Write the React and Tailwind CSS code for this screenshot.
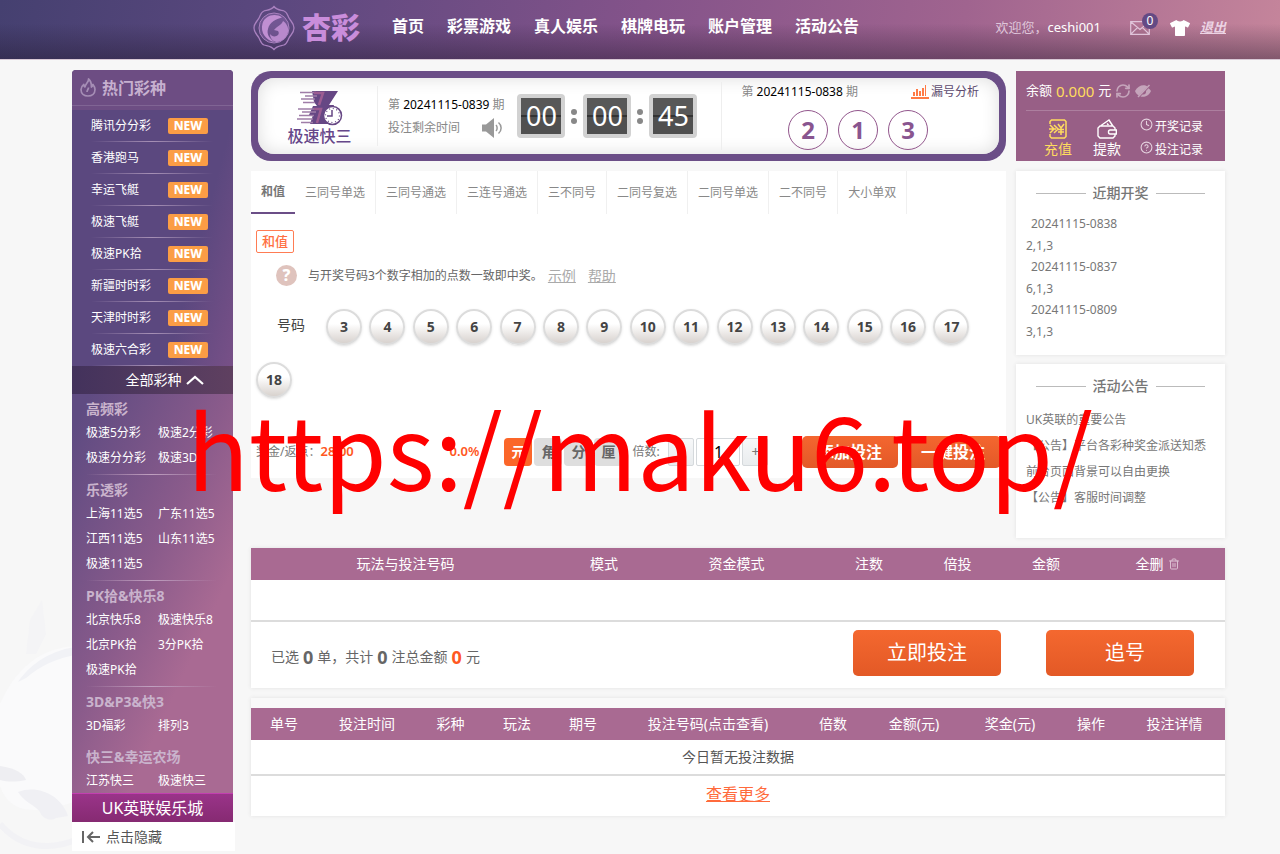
import { useState } from 'react';
import { CircleHelp, Clock, RefreshCw, Trash2 } from 'lucide-react';
import { FaTshirt } from 'react-icons/fa';

const NAV = ['首页', '彩票游戏', '真人娱乐', '棋牌电玩', '账户管理', '活动公告'];

const HOT = ['腾讯分分彩', '香港跑马', '幸运飞艇', '极速飞艇', '极速PK拾', '新疆时时彩', '天津时时彩', '极速六合彩'];

const GROUPS = [
  { title: '高频彩', items: ['极速5分彩', '极速2分彩', '极速分分彩', '极速3D'], end: 'mt-1 mr-4 h-px bg-linear-to-r from-transparent via-[#c0a0c0] to-transparent' },
  { title: '乐透彩', items: ['上海11选5', '广东11选5', '江西11选5', '山东11选5', '极速11选5'], end: 'mt-1 mr-4 h-px bg-linear-to-r from-transparent via-[#c0a0c0] to-transparent' },
  { title: 'PK拾&快乐8', items: ['北京快乐8', '极速快乐8', '北京PK拾', '3分PK拾', '极速PK拾'], end: 'mt-1 mr-4 h-px bg-linear-to-r from-transparent via-[#c0a0c0] to-transparent' },
  { title: '3D&P3&快3', items: ['3D福彩', '排列3'], end: 'h-1' },
  { title: '快三&幸运农场', items: ['江苏快三', '极速快三'], end: 'h-0' },
];

const TABS = ['和值', '三同号单选', '三同号通选', '三连号通选', '三不同号', '二同号复选', '二同号单选', '二不同号', '大小单双'];

const BALLS = [3, 4, 5, 6, 7, 8, 9, 10, 11, 12, 13, 14, 15, 16, 17, 18];

const UNITS = ['元', '角', '分', '厘'];

const RECENT = [
  { issue: '20241115-0838', code: '2,1,3' },
  { issue: '20241115-0837', code: '6,1,3' },
  { issue: '20241115-0809', code: '3,1,3' },
];

const NOTICES = ['UK英联的重要公告', '【公告】平台各彩种奖金派送知悉', '前台页面背景可以自由更换', '【公告】客服时间调整'];

const BET_COLS = [
  { label: '玩法与投注号码', width: 'w-[309px]' },
  { label: '模式', width: 'w-[88px]' },
  { label: '资金模式', width: 'w-[177px]' },
  { label: '注数', width: 'w-[88px]' },
  { label: '倍投', width: 'w-[89px]' },
  { label: '金额', width: 'w-[88px]' },
];

const RECORD_COLS = [
  { label: '单号', width: 'w-[66px]' },
  { label: '投注时间', width: 'w-[100px]' },
  { label: '彩种', width: 'w-[67px]' },
  { label: '玩法', width: 'w-[66px]' },
  { label: '期号', width: 'w-[66px]' },
  { label: '投注号码(点击查看)', width: 'w-[184px]' },
  { label: '倍数', width: 'w-[66px]' },
  { label: '金额(元)', width: 'w-[96px]' },
  { label: '奖金(元)', width: 'w-[96px]' },
  { label: '操作', width: 'w-[66px]' },
  { label: '投注详情', width: 'w-[101px]' },
];

function LogoMark() {
  return (
    <svg viewBox="0 0 44 46" className="h-[46px] w-11" fill="none" stroke="#a981bf">
      <path
        d="M22 1.500c3 4 7 3.500 10 4.500 3 1 3.500 4 5 7 1.500 3 5 5 5 10s-3.500 7-5 10c-1.500 3-2 6-5 7-3 1-7 .5-10 4.500-3-4-7-3.500-10-4.500-3-1-3.500-4-5-7-1.500-3-5-5-5-10s3.500-7 5-10c1.500-3 2-6 5-7 3-1 7-.5 10-4.500z"
        strokeWidth="1.300"
      />
      <circle cx="22" cy="23" r="15" fill="#8f68ac" fillOpacity=".45" strokeWidth="1" />
      <path d="M30 12.500c-7-5-17-2-19.500 6-2.500 9 3.500 17 12 18.500-5.500-4-8-8-6.500-13 1.500-7 8-10 14-11.500z" fill="#c08fd2" stroke="none" />
      <path d="M18 29c2 3 6 3 8 1 1-1 1-3 0-4l-4-1c3-4 8-5 9-9 3 2 6 6 5 11-1 5-5 9-11 10-4 0-7-4-7-8z" fill="#b889cc" stroke="none" />
    </svg>
  );
}

function MailIcon() {
  return (
    <svg viewBox="0 0 20 14" className="h-3.5 w-5" fill="none" stroke="#e0c4da" strokeWidth="1.200">
      <path d="M.7.7h18.600v12.600H.7zM.7.7 10 8.500 19.300.7M.7 13.300l6.800-6.700M19.300 13.300l-6.800-6.700" />
    </svg>
  );
}

function FlameIcon() {
  return (
    <svg viewBox="0 0 16 19" className="h-[19px] w-4" fill="none" stroke="#a58db5" strokeWidth="1.700" strokeLinejoin="round">
      <path d="M8.500 1c.5 3-3 4.500-3.500 8-.8-.6-1.200-1.500-1.200-2.600C1.500 8.300 1 10 1 11.500 1 15.500 4 18 8 18s7-2.500 7-6.500c0-2-1-3.700-2-5-.2 1.300-.7 2-1.600 2.500C11.500 5.500 10.500 2.500 8.500 1z" />
      <path d="M8.500 9.500c0 2-1.500 2.500-1.500 4.500" />
    </svg>
  );
}

function SpeakerIcon() {
  return (
    <svg viewBox="0 0 22 20" className="h-5 w-[22px]" fill="#999">
      <path d="M0 6.500h4L12 0v20l-8-6.500H0z" />
      <path d="M14 7c1.500 1.500 1.500 4.500 0 6M16.500 4.500c3.500 3 3.500 8 0 11" fill="none" stroke="#999" strokeWidth="1.500" />
    </svg>
  );
}

function GameLogo() {
  return (
    <svg viewBox="0 0 46 36" className="h-9 w-[46px]">
      <path d="M15 1h26l-9 14h5L31 34H13l3-9h-4l4-9h4l-3-4z" fill="#664784" />
      <path d="M3 2.500h16M8 6h12M4 9h14M6 12.500h12" stroke="#9f7da8" strokeWidth="1.700" />
      <path d="M1 19h17M5 22h14M2 25.500h15M0 29h16M4 32.500h12" stroke="#9f7da8" strokeWidth="1.700" />
      <path d="M17 3h9l-4 12M17 19h7l-4 14" stroke="#9c5c92" strokeWidth="2.500" fill="none" />
      <circle cx="35.500" cy="25.500" r="9" fill="#fff" stroke="#664784" strokeWidth="1.500" />
      <path d="M35 20v6h-5" stroke="#664784" strokeWidth="1.500" fill="none" />
      <circle cx="35.500" cy="25.500" r="7" fill="none" stroke="#664784" strokeWidth="1.200" strokeDasharray="1 2.670" />
    </svg>
  );
}

function ChartIcon() {
  return (
    <svg viewBox="0 0 18 14" className="h-3.5 w-[18px]" fill="#ff7a45">
      <path d="M0 12h18v2H0zM2 7h2v4H2zM5 4h2v7H5zM8 6h2v5H8zM11 3h2v8h-2zM14 0h1v11h-1z" />
    </svg>
  );
}

function HiddenEyeIcon() {
  return (
    <svg viewBox="0 0 16 14" className="ml-1 h-3.5 w-4" fill="#c5a5bb">
      <path d="M0 7c3-6 9-7 12.500-4.500L4 11.500C2 10.500.8 9 0 7zM16 7c-2.500 5.500-7 6.500-10.500 5.500l2-2c2.500.5 4-1.500 3.500-3.500l2.500-2.700C14.500 5 15.300 6 16 7z" />
      <path d="M3 13 14.500 1" stroke="#c5a5bb" strokeWidth="1.500" />
    </svg>
  );
}

function RechargeIcon() {
  return (
    <svg viewBox="0 0 18 20" className="h-5 w-[18px]" fill="none" stroke="#ffdc5e" strokeWidth="1.500">
      <path d="M1 5V2.500L2.500 1h13L17 2.500v15L15.500 19h-13L1 17.500V15M0 10h7M1 6l4 4-4 4M5 6l4 4-4 4" />
      <path d="m9 5 3 4 3-4M12 9v7M9 10.500h6M9 13h6" />
    </svg>
  );
}

function WithdrawIcon() {
  return (
    <svg viewBox="0 0 20 20" className="h-5 w-5" fill="none" stroke="#fff" strokeWidth="1.400">
      <path d="M18 11V9l-2-2H3L1 9v8l2 2h13l2-2v-2M4 6.500l8-5.500 3.500 5.500M19.300 11H13c-2 0-2 4 0 4h6.300z" />
      <path d="m10 4.500 1.500 1.500" />
    </svg>
  );
}

function Header() {
  return (
    <header className="h-[60px] border-b border-[#d9c9d6] bg-[linear-gradient(to_bottom,transparent_40%,rgba(30,20,40,0.4)),linear-gradient(100deg,#454070_0%,#5c487f_22%,#84538a_50%,#a0648f_75%,#c5859b_100%)]">
      <div className="flex h-full items-center pr-[54px] pl-[252px] text-white">
        <a href="#home" className="flex items-center gap-1.5 pb-1">
          <LogoMark />
          <span className="text-[29px] leading-9 font-black text-[#c98ddb]">杏彩</span>
        </a>
        <nav className="ml-8 flex gap-[23px] pb-2 text-base font-bold whitespace-nowrap">
          {NAV.map((item) => (
            <a key={item} href="#nav">{item}</a>
          ))}
        </nav>
        <div className="ml-auto flex items-center pb-1 text-[13px] whitespace-nowrap">
          <span className="text-[#dfc6da]">欢迎您，</span>
          <span>ceshi001</span>
          <a href="#mail" className="relative ml-[29px]" aria-label="站内信">
            <MailIcon />
            <span className="absolute -top-2 left-3 h-4 w-4 rounded-full bg-[#644a84] text-center text-xs leading-4">0</span>
          </a>
          <a href="#skin" className="ml-5" aria-label="换肤">
            <FaTshirt className="h-5 w-5" />
          </a>
          <a href="#logout" className="ml-2.5 font-bold text-[#ecd3e4] italic underline">退出</a>
        </div>
      </div>
    </header>
  );
}

function Sidebar() {
  return (
    <aside className="w-[163px] shrink-0 text-xs text-white">
      <div className="mr-0.5 overflow-hidden rounded-t-sm">
        <div className="bg-[linear-gradient(105deg,#5b487f_70%,#7b5188)]">
          <div className="h-10 bg-[#6d4d83]">
            <h2 className="flex h-9 items-center gap-1.5 border-b border-[#806494] pl-2 text-base font-bold text-[#c6b0cf]">
              <FlameIcon />
              热门彩种
            </h2>
          </div>
          {HOT.map((name) => (
            <div key={name} className="pl-[19px]">
              <a href="#lottery" className="flex h-[31px] items-center">
                <span className="w-[77px]">{name}</span>
                <span className="h-4 w-10 rounded-xs bg-[#fb9d45] text-center text-xs leading-4 font-extrabold">NEW</span>
              </a>
              <div className="mr-5 h-px bg-linear-to-r from-transparent via-[#a690b5] to-transparent" />
            </div>
          ))}
          <button type="button" className="flex h-7 w-full items-center justify-center gap-1 bg-linear-to-r from-[#43325c] to-[#5f4060] pl-6 text-sm">
            全部彩种
            <svg viewBox="0 0 18 10" className="h-2.5 w-[18px]" fill="none" stroke="#fff" strokeWidth="2.200">
              <path d="m1 9 8-7 8 7" />
            </svg>
          </button>
        </div>
        <div className="bg-[linear-gradient(115deg,#5f4b82_5%,#8a5b8b_45%,#a96a93_70%)]">
          {GROUPS.map((group) => (
            <div key={group.title} className="pt-1 pl-3.5">
              <h3 className="text-sm leading-[22px] font-bold text-[#c9b3cc]">{group.title}</h3>
              <div className="grid grid-cols-[72px_1fr]">
                {group.items.map((item) => (
                  <a key={item} href="#lottery" className="leading-[25px] whitespace-nowrap">{item}</a>
                ))}
              </div>
              <div className={group.end} />
            </div>
          ))}
        </div>
        <a href="#casino" className="block border-t border-[#c23fb0] bg-linear-to-b from-[#9a3489] to-[#862a72] text-center text-base leading-7">
          UK英联娱乐城
        </a>
      </div>
      <button type="button" className="flex h-[29px] w-full items-center gap-1.5 bg-white pl-2.5 text-sm text-[#555]">
        <svg viewBox="0 0 18 12" className="h-3 w-[18px]" fill="none" stroke="#666" strokeWidth="2">
          <path d="M1 0v12M18 6H6M11 1 6 6l5 5" />
        </svg>
        点击隐藏
      </button>
    </aside>
  );
}

function FlipDigit({ value }) {
  return (
    <div className="flex h-11 w-12 items-center justify-center rounded-sm border-4 border-[#d2d2d2] bg-[linear-gradient(to_bottom,#585858_48%,#333_48%,#333_52%,#505050_52%)] text-[27px] text-white">
      {value}
    </div>
  );
}

function Colon() {
  return (
    <div className="flex w-[18px] flex-col items-center gap-[3px]">
      <span className="h-1.5 w-1.5 rounded-full bg-[#888]" />
      <span className="h-1.5 w-1.5 rounded-full bg-[#888]" />
    </div>
  );
}

function Banner() {
  return (
    <section className="flex h-[90px] rounded-[20px] bg-[#6b4e87] p-[7px]">
      <div className="flex flex-1 items-center rounded-2xl bg-white whitespace-nowrap shadow-[inset_0_0_18px_#ddd]">
        <div className="flex w-[120px] flex-col items-center border-r border-[#eee] pt-1 pl-1">
          <GameLogo />
          <span className="text-base leading-5 font-medium text-[#66478a]">极速快三</span>
        </div>
        <div className="ml-2.5 text-xs leading-[23px] text-[#888]">
          <div>第 <span className="text-black">20241115-0839</span> 期</div>
          <div className="flex items-center justify-between">
            投注剩余时间
            <SpeakerIcon />
          </div>
        </div>
        <div className="ml-[13px] flex items-center">
          <FlipDigit value="00" />
          <Colon />
          <FlipDigit value="00" />
          <Colon />
          <FlipDigit value="45" />
        </div>
        <div className="ml-6 flex-1 border-l border-[#eee] pr-5 pl-[19px]">
          <div className="flex justify-between text-xs leading-5 text-[#888]">
            <div>第 <span className="text-black">20241115-0838</span> 期</div>
            <a href="#analysis" className="flex items-center gap-0.5 text-[#5c4a6e]">
              <ChartIcon />
              漏号分析
            </a>
          </div>
          <div className="mt-2 flex justify-center gap-2.5 pr-1">
            {[2, 1, 3].map((n) => (
              <span key={n} className="h-10 w-10 rounded-full border border-[#92568c] text-center text-2xl leading-[38px] font-bold text-[#89558f]">{n}</span>
            ))}
          </div>
        </div>
      </div>
    </section>
  );
}

function BetPanel() {
  const [unit, setUnit] = useState('元');
  const [times, setTimes] = useState(1);

  return (
    <section className="mt-2.5 bg-white pb-2.5 text-xs text-[#666]">
      <div className="flex">
        {TABS.map((tab, index) => (
          <button
            key={tab}
            type="button"
            className={
              index === 0
                ? 'h-[43px] border-b-2 border-[#6b4e87] px-2.5 font-bold text-[#777]'
                : 'h-[43px] border-r border-[#f0f0f0] px-2.5 text-[#888]'
            }
          >
            {tab}
          </button>
        ))}
      </div>

      <div className="px-[5px]">
        <span className="mt-4 inline-block rounded-xs border border-[#ff7c53] px-[5px] text-[13px] leading-[21px] font-medium text-[#ff6f42]">和值</span>
        <div className="mt-3 flex items-center pl-5">
          <span className="mr-[11px] h-[21px] w-[21px] rounded-full bg-[#dfc3bd] text-center text-base leading-[21px] font-extrabold text-white">?</span>
          与开奖号码3个数字相加的点数一致即中奖。
          <a href="#demo" className="ml-[5px] text-sm text-[#aaa] underline">示例</a>
          <a href="#help" className="ml-3 text-sm text-[#aaa] underline">帮助</a>
        </div>
        <div className="mt-[13px] text-[13px] leading-[53px]">
          <span className="inline-block w-[70px] text-center text-sm text-[#444]">号码</span>
          {BALLS.map((n) => (
            <span key={n}>
              <button
                type="button"
                className="mr-1 inline-block h-9 w-9 rounded-full border-2 border-[#dcdcdc] bg-linear-to-b from-white from-40% to-[#d8d2ce] text-center align-middle text-sm font-bold text-[#444] shadow-sm"
              >
                {n}
              </button>{' '}
            </span>
          ))}
        </div>

        <div className="mt-[31px] flex h-8 items-center whitespace-nowrap">
          <span className="text-[#777]">奖金/返点：</span>
          <b className="w-[129px] text-[13px] font-semibold text-[#ff5722]">28.00</b>
          <b className="w-[55px] text-[13px] font-semibold text-[#ff5722]">0.0%</b>
          <div className="flex gap-0.5">
            {UNITS.map((u) => (
              <button
                key={u}
                type="button"
                onClick={() => setUnit(u)}
                className={
                  u === unit
                    ? 'h-7 w-7 rounded-sm bg-[#fb6629] text-sm font-bold text-white'
                    : 'h-7 w-7 rounded-sm bg-[#dedede] text-sm font-bold text-[#666]'
                }
              >
                {u}
              </button>
            ))}
          </div>
          <label htmlFor="times" className="ml-2.5 w-9 text-[#777]">倍数:</label>
          <div className="flex gap-0.5">
            <button type="button" onClick={() => setTimes(Math.max(1, times - 1))} className="h-7 w-[26px] rounded-xs border border-[#d5d9dc] bg-linear-to-b from-[#f7f8f9] to-[#e9ecee] text-sm text-[#777]">-</button>
            <input
              id="times"
              value={times}
              onChange={(e) => setTimes(Number(e.target.value) || 1)}
              className="h-7 w-11 rounded-xs border border-[#d5d9dc] bg-white text-center text-base text-black"
            />
            <button type="button" onClick={() => setTimes(times + 1)} className="h-7 w-[26px] rounded-xs border border-[#d5d9dc] bg-linear-to-b from-[#f7f8f9] to-[#e9ecee] text-sm text-[#777]">+</button>
          </div>
          <div className="ml-auto flex gap-[7px] text-base font-bold text-white">
            <button type="button" className="h-8 w-24 rounded-[5px] bg-linear-to-b from-[#f4662f] to-[#e35928]">添加投注</button>
            <button type="button" className="h-8 w-24 rounded-[5px] bg-linear-to-b from-[#f4662f] to-[#e35928]">一键投注</button>
          </div>
        </div>
      </div>
    </section>
  );
}

function BalanceBox() {
  return (
    <section className="h-[90px] bg-[#985f86] pl-2.5 text-white">
      <div className="flex h-10 items-center border-b border-[#ad7f9f] text-[13px] whitespace-nowrap">
        余额
        <span className="mx-1 text-[15px] text-[#ffdc5e]">0.000</span>
        元
        <RefreshCw className="ml-1 h-4 w-4 text-[#c5a5bb]" strokeWidth={2.500} />
        <HiddenEyeIcon />
      </div>
      <div className="flex pt-2 pl-[18px] whitespace-nowrap">
        <a href="#recharge" className="flex flex-col items-center text-sm text-[#ffdc5e]">
          <RechargeIcon />
          充值
        </a>
        <a href="#withdraw" className="ml-[21px] flex flex-col items-center text-sm">
          <WithdrawIcon />
          提款
        </a>
        <div className="-mt-1 ml-[19px] text-xs leading-[23px]">
          <a href="#draws" className="flex items-center gap-0.5">
            <Clock className="mb-1 h-[13px] w-[13px] text-[#e5d2df]" />
            开奖记录
          </a>
          <a href="#bets" className="flex items-center gap-0.5">
            <CircleHelp className="mb-1 h-[13px] w-[13px] text-[#e5d2df]" />
            投注记录
          </a>
        </div>
      </div>
    </section>
  );
}

function CardTitle({ children }) {
  return (
    <h2 className="mx-2.5 flex items-center gap-[7px] text-sm leading-5 font-medium text-[#777]">
      <span className="h-px flex-1 bg-[#bbb]" />
      {children}
      <span className="h-px flex-1 bg-[#bbb]" />
    </h2>
  );
}

function RightColumn() {
  return (
    <div className="w-[209px] shrink-0 text-xs text-[#777]">
      <BalanceBox />
      <section className="mt-2.5 h-[184px] bg-white px-2.5 pt-3 shadow-[0_0_4px_#e2e2e2]">
        <CardTitle>近期开奖</CardTitle>
        <dl className="mt-2.5 leading-[22px]">
          {RECENT.map((row) => (
            <div key={row.issue}>
              <dt className="pl-[5px]">{row.issue}</dt>
              <dd className="leading-[21px]">{row.code}</dd>
            </div>
          ))}
        </dl>
      </section>
      <section className="mt-[9px] h-[174px] bg-white px-2.5 pt-3 shadow-[0_0_4px_#e2e2e2]">
        <CardTitle>活动公告</CardTitle>
        <ul className="mt-[11px] leading-[26px] whitespace-nowrap">
          {NOTICES.map((item) => (
            <li key={item}><a href="#notice">{item}</a></li>
          ))}
        </ul>
      </section>
    </div>
  );
}

function BetList() {
  return (
    <section className="mt-2.5 bg-white text-sm shadow-[0_0_4px_#e2e2e2]">
      <table className="w-full table-fixed">
        <thead>
          <tr className="h-8 bg-[#a96a92] text-white">
            {BET_COLS.map((col) => (
              <th key={col.label} className={`font-normal ${col.width}`}>{col.label}</th>
            ))}
            <th className="w-[135px] font-normal">
              <button type="button" className="inline-flex items-center gap-1">
                全删
                <Trash2 className="h-3 w-3 text-[#dcc0d2]" />
              </button>
            </th>
          </tr>
        </thead>
        <tbody>
          <tr className="h-[41px] border-b-2 border-[#dcdcdc]">
            <td colSpan={7} />
          </tr>
        </tbody>
      </table>
      <div className="flex h-[66px] items-center pr-[31px] pl-5 text-[#666]">
        <p className="flex items-center gap-1 pt-1">
          已选 <b className="text-lg">0</b> 单，共计 <b className="text-lg">0</b> 注总金额 <b className="text-lg text-[#ff5722]">0</b> 元
        </p>
        <div className="ml-auto flex gap-[45px] pb-1 text-xl text-white">
          <button type="button" className="h-[46px] w-[148px] rounded-[5px] bg-linear-to-b from-[#f4682f] to-[#e35926]">立即投注</button>
          <button type="button" className="h-[46px] w-[148px] rounded-[5px] bg-linear-to-b from-[#f4682f] to-[#e35926] pl-2.5">追号</button>
        </div>
      </div>
    </section>
  );
}

function RecordList() {
  return (
    <section className="mt-2.5 bg-white text-sm shadow-[0_0_4px_#e2e2e2]">
      <div className="h-2.5 bg-[#f9f9f9]" />
      <table className="w-full table-fixed">
        <thead>
          <tr className="h-8 bg-[#a96a92] text-white">
            {RECORD_COLS.map((col) => (
              <th key={col.label} className={`font-normal whitespace-nowrap ${col.width}`}>{col.label}</th>
            ))}
          </tr>
        </thead>
        <tbody>
          <tr className="h-[35px] border-b-2 border-[#dcdcdc] text-[#555]">
            <td colSpan={11} className="text-center">今日暂无投注数据</td>
          </tr>
          <tr className="h-[41px]">
            <td colSpan={11} className="pb-1 text-center">
              <a href="#more" className="text-base text-[#ff6a3c] underline">查看更多</a>
            </td>
          </tr>
        </tbody>
      </table>
    </section>
  );
}

export default function App() {
  return (
    <div className="relative isolate min-h-screen overflow-hidden bg-[#f7f7f7] font-['Noto_Sans','Noto_Sans_CJK_SC',sans-serif]">
      <svg viewBox="0 0 260 320" className="absolute bottom-0 left-0 -z-10 h-80 w-[260px]" fill="none">
        <path d="M0 170c20-45 50-60 90-58v150c-50 20-80 20-90-10z" fill="#fafafb" />
        <path d="M18 148c14-20 34-32 62-36v8c-24 4-40 12-54 24z" fill="#f1f2f6" />
        <path d="M26 120l4-34 12-20 4 34-10 20z" fill="#f4f4f6" />
        <path d="M0 232c16 2 24 8 26 14-10 2-18 2-26 0z" fill="#eeeef2" />
        <path d="M18 258c20-8 44 4 50 24l-12 2c-6 4-14 0-16-6-6-8-14-8-22-20z" fill="#f0f0f4" />
        <path d="M0 290c20 24 50 28 80 14" stroke="#f2f2f5" strokeWidth="6" />
      </svg>

      <Header />
      <main className="flex gap-4 pt-2.5 pr-[55px] pl-[72px]">
        <Sidebar />
        <div className="min-w-0 flex-1 pt-px">
          <div className="flex gap-2.5">
            <div className="min-w-0 flex-1">
              <Banner />
              <BetPanel />
            </div>
            <RightColumn />
          </div>
          <BetList />
          <RecordList />
        </div>
      </main>

      <div className="pointer-events-none absolute inset-x-0 top-[396px] text-center font-['Noto_Sans_CJK_SC',sans-serif] text-[102px] leading-none whitespace-nowrap text-[#f00]">
        https://maku6.top/
      </div>
    </div>
  );
}
